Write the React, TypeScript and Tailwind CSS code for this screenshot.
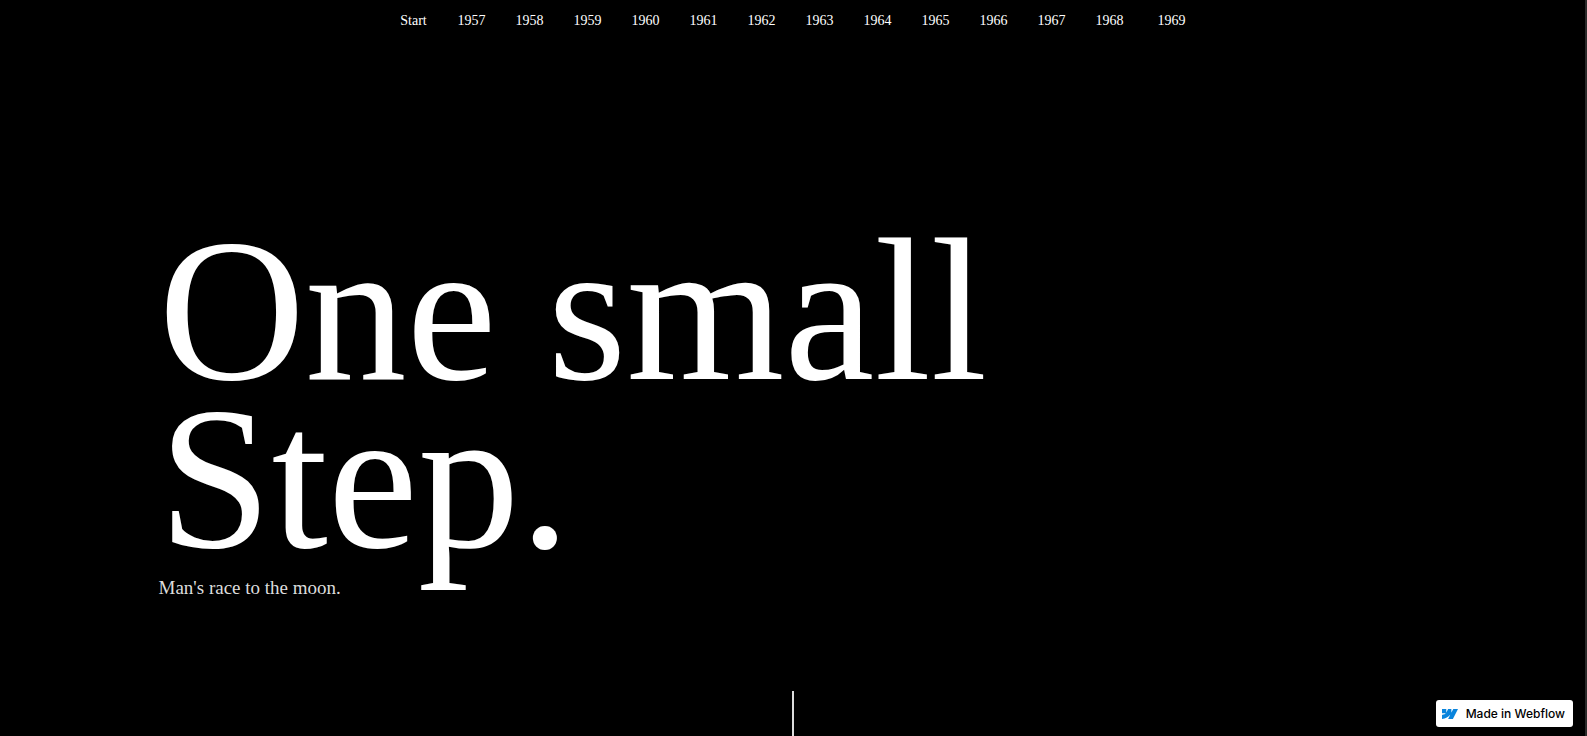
const chapters = [
  "Start", "1957", "1958", "1959", "1960", "1961", "1962",
  "1963", "1964", "1965", "1966", "1967", "1968", "1969",
];

function WebflowMark() {
  return (
    <svg viewBox="0 0 1080 674" className="h-[10px] w-4 shrink-0" aria-hidden="true">
      <path
        fillRule="evenodd"
        clipRule="evenodd"
        fill="#0a84dc"
        d="M1080 0 735 674H412l144-279h-6C431 550 253 652 0 674V399s162-10 257-110H0V0h289v238h6L413 0h219v236h6L760 0z"
      />
    </svg>
  );
}

export default function App() {
  return (
    <div className="flex min-h-screen flex-col border-r-2 border-[#2b2b2b] bg-black font-['Liberation_Serif',serif] text-white">
      <nav aria-label="Timeline" className="pt-[11px] pb-[9px]">
        <ul className="flex flex-wrap justify-center text-sm">
          {chapters.map((label) => (
            <li key={label} className="w-[58px] text-center last:ml-1">
              <a href={`#${label.toLowerCase()}`}>{label}</a>
            </li>
          ))}
        </ul>
      </nav>

      <main className="flex grow flex-col px-[10%] pt-[187px]">
        <h1 className="text-[203px] leading-[168px]">
          One small
          <br />
          Step.
        </h1>
        <p className="mt-[13px] text-[19px] leading-6 text-[#dddddd]">Man's race to the moon.</p>
        <div className="mx-auto mt-auto h-[45px] w-0.5 bg-[#dddddd]" />
      </main>

      <a
        href="#webflow"
        className="fixed right-[14px] bottom-[9px] flex h-[27px] items-center gap-2 rounded-[3px] bg-white pr-2 pl-[6px] font-['Inter',sans-serif] text-xs font-medium whitespace-nowrap text-black"
      >
        <WebflowMark />
        Made in Webflow
      </a>
    </div>
  );
}
